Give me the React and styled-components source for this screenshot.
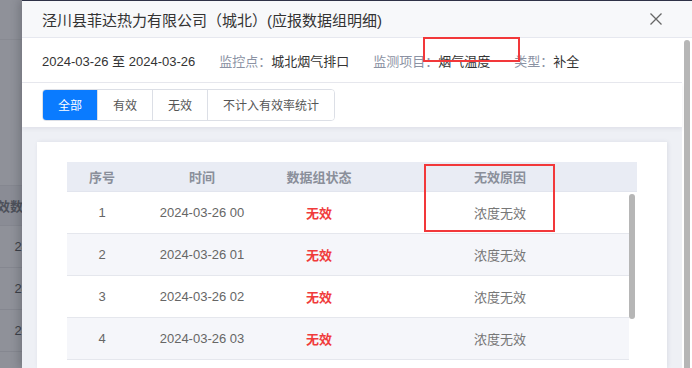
import styled, { createGlobalStyle } from 'styled-components';

const GlobalStyle = createGlobalStyle`
  html, body {
    margin: 0;
    padding: 0;
  }
  body {
    width: 692px;
    height: 368px;
    overflow: hidden;
    background: #8f9199;
    font-family: "Liberation Sans", "Noto Sans CJK SC", sans-serif;
  }
  * {
    box-sizing: border-box;
  }
`;

const Screen = styled.div`
  position: relative;
  display: flex;
  width: 692px;
  height: 368px;
  overflow: hidden;
`;

// the page behind the dialog, dimmed by the mask
const Backdrop = styled.div`
  width: 22px;
  flex-shrink: 0;
  display: flex;
  flex-direction: column;
  overflow: hidden;
  background: #8f9199;
`;

const GhostTop = styled.div`
  height: 40px;
  flex-shrink: 0;
  border-bottom: 1px solid #888a92;
  margin-bottom: 145px;
`;

const GhostRow = styled.div`
  height: ${(p) => (p.$head ? '41px' : '42px')};
  flex-shrink: 0;
  display: flex;
  align-items: center;
  justify-content: flex-end;
  white-space: nowrap;
  border-top: ${(p) => (p.$head ? '1px solid #858790' : 'none')};
  border-bottom: 1px solid #858790;
  background: ${(p) => (p.$head ? '#8a8c95' : 'transparent')};
  color: ${(p) => (p.$head ? '#4d505a' : '#3b3e47')};
  font-size: 13px;
  font-weight: ${(p) => (p.$head ? 700 : 400)};

  span {
    margin-right: ${(p) => (p.$head ? '-14px' : '-7px')};
  }
`;

const Modal = styled.div`
  flex: 1;
  display: flex;
  flex-direction: column;
  min-width: 0;
  background: #fff;
  border-top: 1px solid #2e3247;
  box-shadow: -3px 0 8px rgba(40, 42, 50, 0.25);
`;

const ModalHeader = styled.header`
  height: 37px;
  flex-shrink: 0;
  display: flex;
  align-items: center;
  justify-content: space-between;
  padding: 0 30px 0 20px;
  background: #f7f8fa;
  border-bottom: 1px solid #e6e8ef;
`;

const Title = styled.h2`
  margin: 0;
  font-size: 15px;
  font-weight: 400;
  color: #333;
`;

const CloseButton = styled.button`
  width: 12px;
  height: 12px;
  padding: 0;
  border: none;
  background: transparent;
  display: flex;
  cursor: pointer;
`;

const ModalBody = styled.div`
  flex: 1;
  display: flex;
  min-height: 0;
`;

const Content = styled.div`
  flex: 1;
  display: flex;
  flex-direction: column;
  min-width: 0;
`;

const ScrollTrack = styled.div`
  width: ${(p) => p.$w}px;
  flex-shrink: 0;
  display: flex;
  justify-content: flex-end;
  padding: ${(p) => p.$pad};
  background: ${(p) => p.$bg || 'transparent'};
`;

const ScrollThumb = styled.div`
  width: 6px;
  height: ${(p) => p.$h}px;
  border-radius: 3px;
  background: #b6b6b6;
`;

const InfoRow = styled.div`
  height: 45px;
  flex-shrink: 0;
  display: flex;
  align-items: center;
  gap: 24px;
  padding-left: 20px;
  border-bottom: 1px solid #e8e9ef;
  font-size: 13px;
  color: #333;
`;

const Label = styled.span`
  color: #8b92a3;
`;

const TabBar = styled.div`
  height: 44px;
  flex-shrink: 0;
  display: flex;
  align-items: center;
  padding: 0 20px 1px;
  position: relative;
  z-index: 1;
  box-shadow: 0 2px 4px rgba(60, 70, 100, 0.08);
`;

const Segment = styled.div`
  display: flex;
  height: 32px;
  border: 1px solid #dcdfe6;
  border-radius: 4px;
  overflow: hidden;
`;

const SegmentButton = styled.button`
  padding: 0 15px;
  border: none;
  border-left: ${(p) => (p.$first ? 'none' : '1px solid #dcdfe6')};
  background: ${(p) => (p.$active ? '#0a7bff' : '#fff')};
  color: ${(p) => (p.$active ? '#fff' : '#555')};
  font-family: inherit;
  font-size: 12px;
  cursor: pointer;
`;

const Panel = styled.div`
  flex: 1;
  padding: 15px 15px 0;
  background: #eef0f5;
  display: flex;
  min-height: 0;
`;

const Card = styled.div`
  flex: 1;
  padding: 20px 30px 0;
  background: #fff;
  box-shadow: 1px 0 4px rgba(60, 70, 100, 0.1);
`;

const columns = '70px 130px 104px 1fr';

const HeadRow = styled.div`
  display: grid;
  grid-template-columns: ${columns};
  height: 30px;
  padding-right: 8px;
  background: #e9ecf4;
  border-bottom: 1px solid #e2e5ee;
  align-items: center;
  text-align: center;
  font-size: 13px;
  font-weight: 700;
  color: #8a8f9a;
`;

const TableBody = styled.div`
  display: flex;
`;

const Rows = styled.div`
  flex: 1;
`;

const Row = styled.div`
  display: grid;
  grid-template-columns: ${columns};
  height: 42px;
  align-items: center;
  text-align: center;
  border-bottom: 1px solid #e5e7ed;
  background: ${(p) => (p.$striped ? '#f5f6fa' : '#fff')};
  font-size: 13px;
  color: #666;
`;

const Status = styled.span`
  color: #f03b3b;
  font-weight: 700;
`;

const Reason = styled.span`
  color: #777;
`;

// red markup boxes drawn over the screenshot
const Mark = styled.div`
  position: absolute;
  border: 2px solid #f2383a;
  pointer-events: none;
`;

const rows = [
  { no: 1, time: '2024-03-26 00' },
  { no: 2, time: '2024-03-26 01' },
  { no: 3, time: '2024-03-26 02' },
  { no: 4, time: '2024-03-26 03' },
];

const tabs = ['全部', '有效', '无效', '不计入有效率统计'];

const App = () => {
  return (
    <Screen>
      <GlobalStyle />
      <Backdrop>
        <GhostTop />
        <GhostRow $head>
          <span>有效数据</span>
        </GhostRow>
        {[1, 2, 3, 4].map((n) => (
          <GhostRow key={n}>
            <span>24</span>
          </GhostRow>
        ))}
      </Backdrop>

      <Modal>
        <ModalHeader>
          <Title>泾川县菲达热力有限公司（城北）(应报数据组明细)</Title>
          <CloseButton aria-label="关闭">
            <svg width="12" height="12" viewBox="0 0 12 12">
              <path d="M0.5 0.5L11.5 11.5M11.5 0.5L0.5 11.5" stroke="#666" strokeWidth="1.3" fill="none" />
            </svg>
          </CloseButton>
        </ModalHeader>

        <ModalBody>
          <Content>
            <InfoRow>
              <span>2024-03-26 至 2024-03-26</span>
              <span>
                <Label>监控点：</Label>城北烟气排口
              </span>
              <span>
                <Label>监测项目：</Label>烟气温度
              </span>
              <span>
                <Label>类型：</Label>补全
              </span>
            </InfoRow>

            <TabBar>
              <Segment>
                {tabs.map((t, i) => (
                  <SegmentButton key={t} $first={i === 0} $active={i === 0}>
                    {t}
                  </SegmentButton>
                ))}
              </Segment>
            </TabBar>

            <Panel>
              <Card>
                <HeadRow>
                  <span>序号</span>
                  <span>时间</span>
                  <span>数据组状态</span>
                  <span>无效原因</span>
                </HeadRow>
                <TableBody>
                  <Rows>
                    {rows.map((r, i) => (
                      <Row key={r.no} $striped={i % 2 === 1}>
                        <span>{r.no}</span>
                        <span>{r.time}</span>
                        <Status>无效</Status>
                        <Reason>浓度无效</Reason>
                      </Row>
                    ))}
                  </Rows>
                  <ScrollTrack $w={8} $pad="2px 2px 0 0">
                    <ScrollThumb $h={125} />
                  </ScrollTrack>
                </TableBody>
              </Card>
            </Panel>
          </Content>
          <ScrollTrack $w={10} $pad="2px 2px 0 2px" $bg="#fff">
            <ScrollThumb $h={400} />
          </ScrollTrack>
        </ModalBody>
      </Modal>

      <Mark style={{ left: 423, top: 37, width: 97, height: 25 }} />
      <Mark style={{ left: 424, top: 164, width: 131, height: 68 }} />
    </Screen>
  );
};

export default App;
